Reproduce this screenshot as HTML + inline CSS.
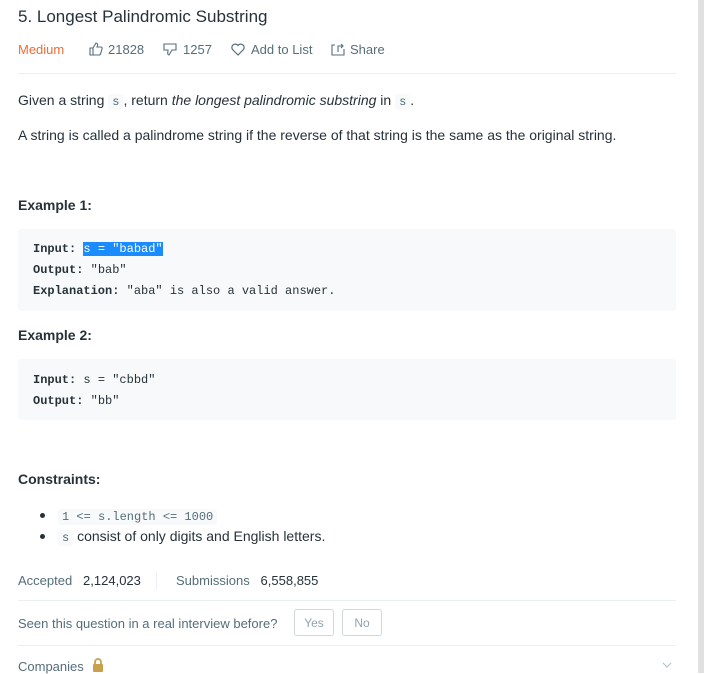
<!DOCTYPE html>
<html><head><style>
body{margin:0;width:711px;height:673px;overflow:hidden;background:#fff;font-family:"Liberation Sans",sans-serif;color:#263238;position:relative}
.a{position:absolute;white-space:nowrap}
.t{font-size:14px}
code,.m{font-family:"Liberation Mono",monospace}
.ic{background:#f7f9fa;border-radius:3px;padding:1px 4px;font-size:12px;color:#546e7a}
.pre{position:absolute;left:18px;width:658px;background:#f7f9fa;border-radius:3px}
.pre div{position:absolute;left:15px;font-family:"Liberation Mono",monospace;font-size:12px;color:#263238}
b{font-weight:bold}
.hr{position:absolute;left:18px;width:658px;height:1px;background:#eceff1}
.g{color:#546e7a;font-size:13px}
.btn{position:absolute;top:609px;height:27px;border:1px solid #cfd8dc;border-radius:3px;color:#90a4ae;font-size:12px;text-align:center;line-height:27px;box-sizing:border-box}
</style></head><body>
<div class="a" style="left:18px;top:7px;font-size:17px;font-weight:500">5. Longest Palindromic Substring</div>
<div class="a" style="left:18px;top:42px;font-size:13px;color:#ef6c35">Medium</div>
<svg class="a" style="left:89px;top:42px" width="14" height="14" viewBox="0 0 14 14" fill="none" stroke="#546e7a" stroke-width="1.1"><path d="M1 6h3v7H1zM4 6l3-5c1 0 2 1 1.5 2.5L8 5h4c1 0 1.5 1 1 2l-1.5 5c-.3.7-.8 1-1.5 1H4"/></svg>
<div class="a g" style="left:108px;top:42px">21828</div>
<svg class="a" style="left:163px;top:43px" width="14" height="14" viewBox="0 0 14 14" fill="none" stroke="#546e7a" stroke-width="1.1"><path d="M1 1h12v6H9l-3 5c-1 0-1.5-1-1.2-2.5L5 7H1z"/></svg>
<div class="a g" style="left:183px;top:42px">1257</div>
<svg class="a" style="left:231px;top:43px" width="14" height="13" viewBox="0 0 14 13" fill="none" stroke="#546e7a" stroke-width="1.2"><path d="M7 12L1.5 6.5A3 3 0 0 1 7 2.5a3 3 0 0 1 5.5 4z"/></svg>
<div class="a g" style="left:251px;top:42px">Add to List</div>
<svg class="a" style="left:331px;top:43px" width="14" height="13" viewBox="0 0 14 13" fill="none" stroke="#546e7a" stroke-width="1.1"><path d="M4 2H1v10h12V6M7 9V3h5M10 1l2 2-2 2"/></svg>
<div class="a g" style="left:350px;top:42px">Share</div>
<div class="hr" style="top:73px"></div>
<div class="a t" style="left:18px;top:92px">Given a string <code class="ic">s</code>, return <i>the longest palindromic substring</i> in <code class="ic">s</code>.</div>
<div class="a t" style="left:18px;top:127px">A string is called a palindrome string if the reverse of that string is the same as the original string.</div>
<div class="a t" style="left:18px;top:197px;font-weight:bold">Example 1:</div>
<div class="pre" style="top:229px;height:82px">
<div style="top:13px"><b>Input:</b> <span style="background:#1a8cff;color:#fff">s = "babad"</span></div>
<div style="top:34px"><b>Output:</b> "bab"</div>
<div style="top:55px"><b>Explanation:</b> "aba" is also a valid answer.</div>
</div>
<div class="a t" style="left:18px;top:327px;font-weight:bold">Example 2:</div>
<div class="pre" style="top:359px;height:61px">
<div style="top:14px"><b>Input:</b> s = "cbbd"</div>
<div style="top:35px"><b>Output:</b> "bb"</div>
</div>
<div class="a t" style="left:18px;top:471px;font-weight:bold">Constraints:</div>
<div class="a" style="left:40px;top:513px;width:5px;height:5px;border-radius:50%;background:#263238"></div>
<div class="a" style="left:58px;top:507px"><code class="ic" style="color:#546e7a">1 &lt;= s.length &lt;= 1000</code></div>
<div class="a" style="left:40px;top:534px;width:5px;height:5px;border-radius:50%;background:#263238"></div>
<div class="a t" style="left:58px;top:528px"><code class="ic">s</code> consist of only digits and English letters.</div>
<div class="a g" style="left:18px;top:573px">Accepted&nbsp;&nbsp; <span style="color:#263238">2,124,023</span></div>
<div class="a" style="left:156px;top:572px;width:1px;height:18px;background:#eceff1"></div>
<div class="a g" style="left:176px;top:573px">Submissions&nbsp;&nbsp; <span style="color:#263238">6,558,855</span></div>
<div class="hr" style="top:600px"></div>
<div class="a g" style="left:18px;top:616px">Seen this question in a real interview before?</div>
<div class="btn" style="left:294px;width:40px">Yes</div>
<div class="btn" style="left:342px;width:40px">No</div>
<div class="hr" style="top:645px"></div>
<div class="a g" style="left:18px;top:659px">Companies</div>
<svg class="a" style="left:91px;top:657px" width="14" height="16" viewBox="0 0 14 16"><path d="M4 7V5a3 3 0 0 1 6 0v2" fill="none" stroke="#c9a04c" stroke-width="1.8"/><rect x="2" y="7" width="10" height="8" rx="1" fill="#c9a04c"/></svg>
<svg class="a" style="left:662px;top:662px" width="10" height="6"><path d="M1 1l4 4 4-4" fill="none" stroke="#b0bec5"/></svg>
<div class="a" style="left:698px;top:0;width:6px;height:673px;background:#e0e0e0"></div>
</body></html>
